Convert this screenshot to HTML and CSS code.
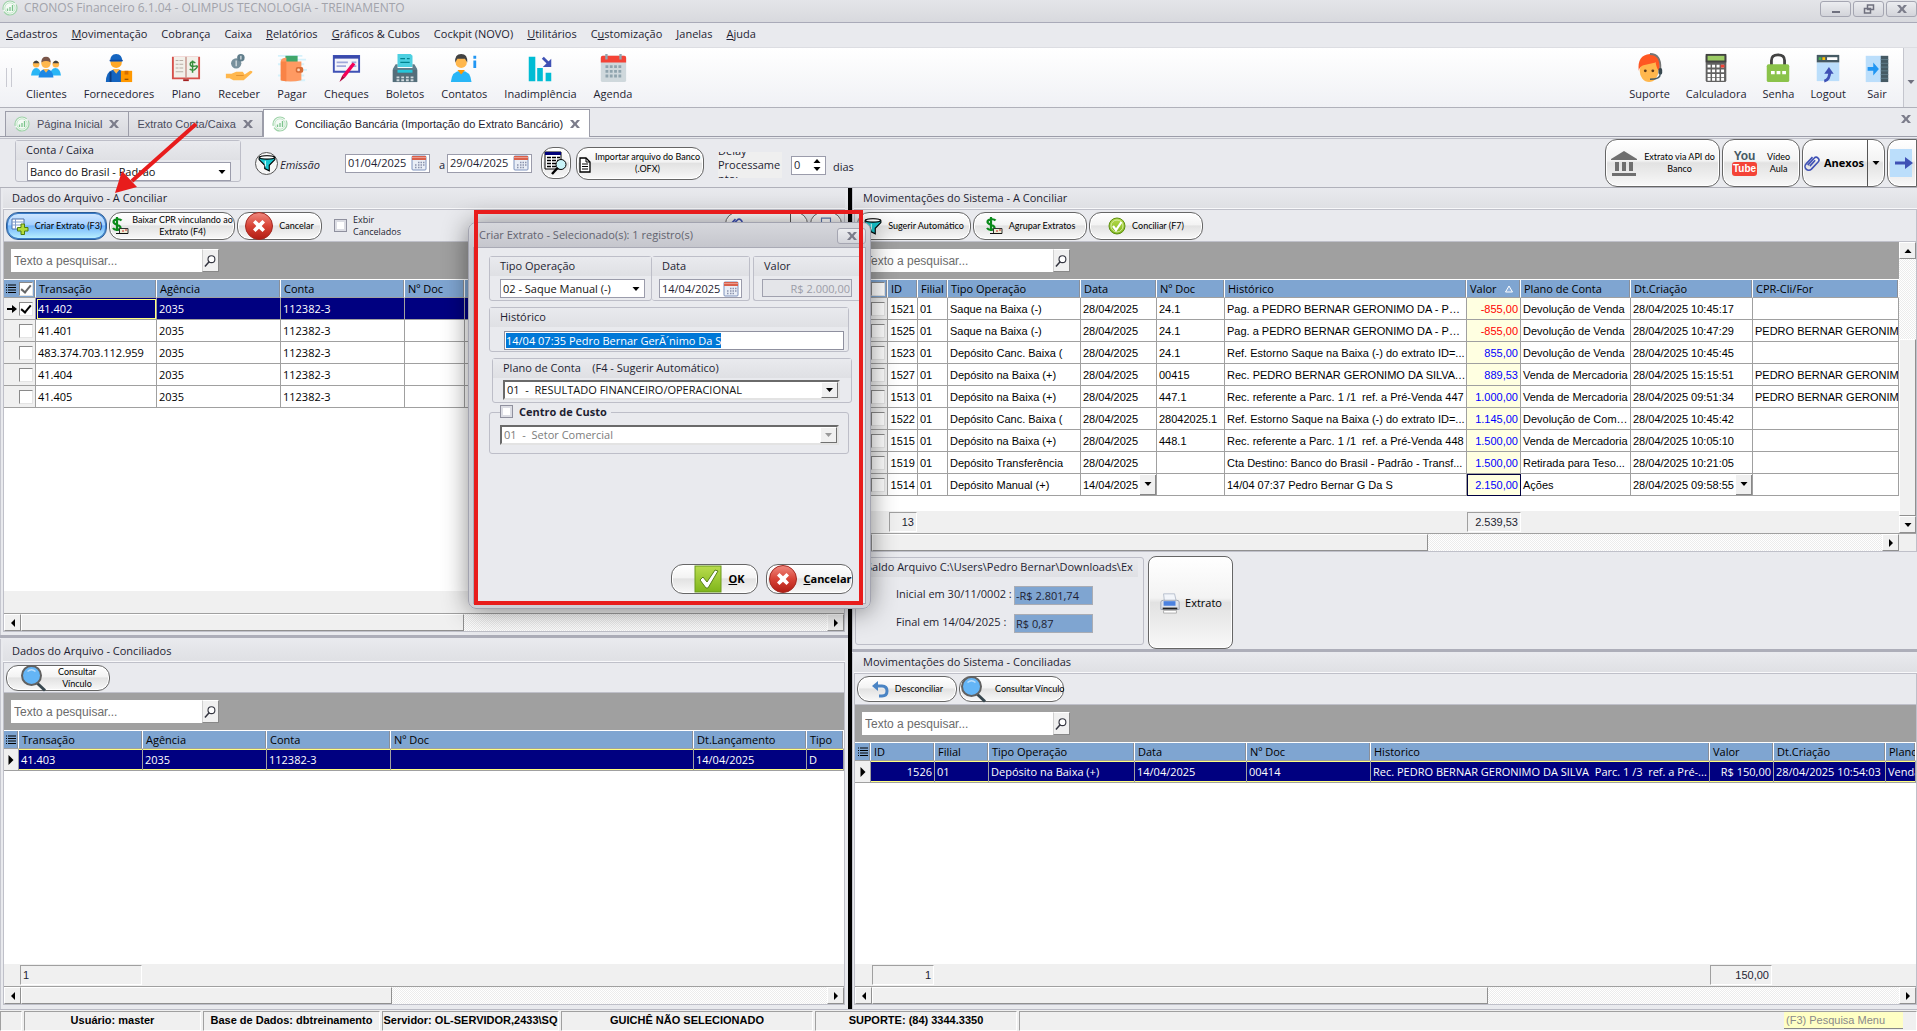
FILE: index.html
```html
<!DOCTYPE html>
<html lang="pt-BR">
<head>
<meta charset="utf-8">
<title>CRONOS Financeiro 6.1.04 - OLIMPUS TECNOLOGIA - TREINAMENTO</title>
<link rel="stylesheet" href="styles.css">
</head>
<body>
<svg class="defs" aria-hidden="true">
  <defs>
    <linearGradient id="red" x1="0" y1="0" x2="0" y2="1"><stop offset="0" stop-color="#f08a80"/><stop offset=".5" stop-color="#d84336"/><stop offset="1" stop-color="#b01c14"/></linearGradient>
    <linearGradient id="green" x1="0" y1="0" x2="0" y2="1"><stop offset="0" stop-color="#b9dc4e"/><stop offset="1" stop-color="#7fb51a"/></linearGradient>
  </defs>
  <symbol id="logo" viewBox="0 0 16 16"><circle cx="8" cy="8" r="7" fill="#f4faf5" stroke="#9fd3a9" stroke-width="1.2" stroke-dasharray="18 2"/><circle cx="8" cy="8" r="5.2" fill="none" stroke="#c3e6ca"/><path d="M5.500 11V8.500M8 11V7M10.500 11V5" stroke="#7cc48c" stroke-width="1.300"/></symbol>
  <symbol id="x" viewBox="0 0 10 10"><path d="M0 1h3l2 2.500L7 1h3L6.600 5 10 9H7L5 6.500 3 9H0l3.400-4z" fill="#7c7d8b"/></symbol>
  <symbol id="cal" viewBox="0 0 16 16"><rect x="1" y="1" width="14" height="14" rx="1" fill="#e9eef6" stroke="#7f93bd"/><path d="M1 1h14v4H1z" fill="#d9614c"/><path d="M1 2.500h14" stroke="#eb9a8b"/><path d="M7 7.500h1.500m1 0h1.500m1 0h1.500M4 10h1.500m1.500 0h1.500m1 0h1.500m1 0h1.500M4 12.500h1.500m1.500 0h1.500m1 0h1.500" stroke="#8a93ad" stroke-width="1.500"/></symbol>
  <symbol id="lens" viewBox="0 0 14 14"><circle cx="8" cy="5" r="3.700" fill="#fff" stroke="#33343f" stroke-width="1.200"/><path d="M5.300 8 1 13" stroke="#33343f" stroke-width="1.600"/></symbol>
  <symbol id="lines" viewBox="0 0 12 12"><path d="M3 2h8M3 4.500h8M3 7h8M3 9.500h8M1 2h1M1 4.500h1M1 7h1M1 9.500h1" stroke="#000" stroke-width="1"/></symbol>
  <symbol id="up" viewBox="0 0 8 8"><path d="M4 2l3.500 4h-7z"/></symbol>
  <symbol id="down" viewBox="0 0 8 8"><path d="M.5 2h7L4 6z"/></symbol>
  <symbol id="left" viewBox="0 0 8 8"><path d="M2 4l4-4v8z"/></symbol>
  <symbol id="right" viewBox="0 0 8 8"><path d="M6 4L2 0v8z"/></symbol>
  <symbol id="funnel" viewBox="0 0 16 16"><path d="M1 3c0-1.500 14-1.500 14 0v2l-5 5v5l-4-2v-3L1 5z" fill="#18c6cf" stroke="#000"/><ellipse cx="8" cy="3" rx="6.500" ry="1.500" fill="#fff" stroke="#000"/><path d="M6.500 6v5" stroke="#d8ffff"/></symbol>
  <symbol id="money" viewBox="0 0 18 18"><path d="M10.500 3.500C9 1.500 2.500 2 2.500 5s7 2.500 7 5.500-6 3-7.500.5M6 0v14" fill="none" stroke="#0a8a1a" stroke-width="2.200"/><path d="M8.500 11.500h8.500v5H8.500z" fill="#ececd4" stroke="#333"/><path d="M11 14h2m1-1h2" stroke="#c22"/><path d="M5 16.500h12" stroke="#111"/></symbol>
  <symbol id="cancel" viewBox="0 0 28 28"><circle cx="14" cy="14" r="13.500" fill="url(#red)" stroke="#a32a22"/><path d="M8 10.500L10.500 8 14 11.300 17.500 8l2.500 2.500L16.700 14l3.300 3.500-2.500 2.500L14 16.700 10.500 20 8 17.500 11.300 14z" fill="#fff"/></symbol>
  <symbol id="search-big" viewBox="0 0 28 28"><path d="M17 19l8 7.500" stroke="#37474f" stroke-width="3"/><circle cx="11.500" cy="11.500" r="9.500" fill="#64b5f6" stroke="#616161" stroke-width="2"/><path d="M7.500 7.500q4-3.500 8 0" stroke="#bbdefb" stroke-width="1.500" fill="none"/></symbol>
  <symbol id="clip" viewBox="0 0 16 16"><path d="M3.500 9.500L9.500 3a2.600 2.600 0 013.800 3.600L7 13.300a3.500 3.500 0 01-5-5L8 2M5.500 10.500l5-5.500" fill="none" stroke="#3f51b5" stroke-width="1.500"/></symbol>
  <symbol id="exit" viewBox="0 0 24 28"><path d="M0 0h22v28H0z" fill="#bbdefb"/><path d="M5 12.500h10V8l8 6-8 6v-4.500H5z" fill="#3f51b5"/></symbol>
</svg>

<header class="titlebar">
  <svg class="i16"><use href="#logo"/></svg>
  <h1>CRONOS Financeiro 6.1.04 - OLIMPUS TECNOLOGIA - TREINAMENTO</h1>
  <button class="winbtn" aria-label="Minimizar"><svg viewBox="0 0 12 10"><path d="M2 8h8" stroke="#6f707e" stroke-width="2"/></svg></button>
  <button class="winbtn" aria-label="Restaurar"><svg viewBox="0 0 12 10"><path d="M4.500 1h6v4.500h-6zM1.500 4.500h6V9h-6z" fill="#e0e1e5" stroke="#6f707e" stroke-width="1.500"/></svg></button>
  <button class="winbtn" aria-label="Fechar"><svg viewBox="0 0 10 10"><use href="#x"/></svg></button>
</header>

<nav class="menu">
  <a href="#"><u>C</u>adastros</a><a href="#"><u>M</u>ovimentação</a><a href="#">Cobrança</a><a href="#">Caixa</a><a href="#"><u>R</u>elatórios</a><a href="#"><u>G</u>ráficos &amp; Cubos</a><a href="#">Cockpit (NOVO)</a><a href="#"><u>U</u>tilitários</a><a href="#">C<u>u</u>stomização</a><a href="#"><u>J</u>anelas</a><a href="#"><u>A</u>juda</a>
</nav>

<div class="ribbon">
  <span class="grip"></span>
  <button><svg viewBox="0 0 32 32"><circle cx="5.500" cy="12" r="3.500" fill="#ffb74d"/><path d="M2 11q3.500-6 7 0z" fill="#424242"/><circle cx="26.500" cy="12" r="3.500" fill="#ffb74d"/><path d="M23 11q3.500-6 7 0z" fill="#424242"/><path d="M0 24q1-8 5.500-8t6 8zM20 24q1-8 6-8t6 8z" fill="#29b6f6"/><circle cx="16" cy="11" r="5" fill="#ffb74d"/><path d="M11 10q0-6 5-6t5 6q-5-3-10 0z" fill="#795548"/><path d="M8 26q1-9 8-9t8 9z" fill="#1e88e5"/><path d="M13 17h6l-3 4z" fill="#ffb74d"/></svg>Clientes</button>
  <button><svg viewBox="0 0 32 32"><circle cx="13" cy="10" r="6" fill="#ffa726"/><path d="M6.500 9q0-8 6.500-8t6.500 8z" fill="#1565c0"/><path d="M6 8h14" stroke="#0d47a1" stroke-width="1.500"/><path d="M2 31q0-11 7-13h8q7 2 7 13z" fill="#1565c0"/><path d="M9 17h8l-4 5z" fill="#ffb74d"/><path d="M7 20v11M19 20v11" stroke="#0d3c80" stroke-width="2"/><path d="M18 19h12v12H18z" fill="#ff9800"/><path d="M22 19h4v4h-4z" fill="#d66f00"/><path d="M22 28h4" stroke="#6d3500"/></svg>Fornecedores</button>
  <button><svg viewBox="0 0 32 32"><path d="M1 4h30v24H1z" fill="#d6504a"/><path d="M13 28h6v2h-6z" fill="#a32020"/><path d="M3 4h12.500v22H3zM16.500 4H29v22H16.500z" fill="#f2f0ea"/><path d="M16 4v23" stroke="#bdb7ad"/><path d="M5 8h3m1 0h4M5 12h3m1 0h4M5 16h3m1 0h4M5 20h8" stroke="#b4a9a0"/><path d="M26 10.500q-5-2.500-5.500 1t5 2.500-.5 4q-3 1-5-1M23 8v13" fill="none" stroke="#388e3c" stroke-width="1.600"/></svg>Plano</button>
  <button><svg viewBox="0 0 32 32"><circle cx="13" cy="11" r="5.500" fill="#78909c"/><circle cx="18" cy="5" r="4" fill="#607d8b"/><path d="M13 8v6M18 3v4" stroke="#cfd8dc" stroke-width="1.500"/><path d="M2 22h6l5-2h7l2 3 6-4q3 0 2 2l-9 8H10l-4-2H2z" fill="#ffb74d"/><path d="M13 24h8" stroke="#e09030"/></svg>Receber</button>
  <button><svg viewBox="0 0 32 32"><path d="M1 3h26M3 7h28M1 12h28M4 18h28M1 24h28M4 29h26" stroke="#d5f1fb" stroke-width="2"/><path d="M9 3h13v8H9z" fill="#3fa66a"/><path d="M4 9q0-4 6-4v4h16v20q-12 3-22 0z" fill="#ff9a62"/><path d="M4 9v20q4 1 6 1V9z" fill="#f98346"/><rect x="20" y="15" width="8" height="6" rx="2" fill="#d76b35"/><circle cx="23" cy="18" r="1.500" fill="#ffd3b8"/></svg>Pagar</button>
  <button><svg viewBox="0 0 32 32"><path d="M3 3h27v17H3z" fill="#f4f5fb" stroke="#3f51b5" stroke-width="2"/><path d="M3 3h27v3H3z" fill="#3949ab"/><path d="M6 10h12M22 10h5M6 14h10M20 14h7" stroke="#9fa8da" stroke-width="2"/><path d="M23 10l3 2-11 14-3-2z" fill="#f50057"/><path d="M12 24l3 2-6 5z" fill="#b0003a"/></svg>Cheques</button>
  <button><svg viewBox="0 0 32 32"><path d="M10 1h12l2 2v12H8V1z" fill="#4dd0e1"/><path d="M11 6h5m2 0h3M11 10h10" stroke="#00838f" stroke-width="1.300"/><path d="M6 12h2v4h16v-4h2l3 5v14H3V17z" fill="#607d8b"/><path d="M3 18h26v13H3z" fill="#546e7a"/><path d="M8 18h16v3H8z" fill="#26c6da"/><path d="M7 26h18m-18 3h18" stroke="#cfd8dc" stroke-width="2" stroke-dasharray="3 2"/></svg>Boletos</button>
  <button><svg viewBox="0 0 32 32"><circle cx="13" cy="10" r="6" fill="#ffb74d"/><path d="M6.500 10Q6 1 13 1t6.500 9L17 6H9z" fill="#424242"/><path d="M2 31q1-12 11-12t11 12z" fill="#29b6f6"/><path d="M9 18h8l-4 5z" fill="#ff9800"/><path d="M26 3h3v3h-3zM26 8h3v8h-3z" fill="#2196f3"/></svg>Contatos</button>
  <button><svg viewBox="0 0 32 32"><path d="M4 4h7v26H4zM13 16h6v14h-6zM22 21h6v9h-6z" fill="#00bcd4"/><path d="M19 5l7 7" stroke="#3f51b5" stroke-width="3"/><path d="M28 6v9h-9z" fill="#3f51b5"/></svg>Inadimplência</button>
  <button><svg viewBox="0 0 32 32"><rect x="3" y="3" width="27" height="28" rx="2" fill="#cfd8dc"/><path d="M3 10V5q0-2 2-2h23q2 0 2 2v5z" fill="#f44336"/><path d="M9 1v6M24 1v6" stroke="#90a4ae" stroke-width="2.500"/><path d="M8 14.500h17M8 19.500h17M8 24.500h17" stroke="#90a4ae" stroke-width="3" stroke-dasharray="3 1.600"/></svg>Agenda</button>
  <span class="grow"></span>
  <button><svg viewBox="0 0 32 32"><ellipse cx="15" cy="19" rx="10" ry="12" fill="#ffb74d"/><path d="M4 19Q2 2 16 1q13 0 10 18-3-2-4-9L9 13q-4 1-5 6z" fill="#ff5722"/><path d="M16 1q12 0 11 16" fill="none" stroke="#757575" stroke-width="2"/><rect x="25" y="16" width="4" height="7" rx="2" fill="#37474f"/><path d="M27 22q0 6-11 6" fill="none" stroke="#455a64" stroke-width="1.500"/><circle cx="11" cy="19" r="1.500" fill="#5d3a1a"/><circle cx="19" cy="19" r="1.500" fill="#5d3a1a"/></svg>Suporte</button>
  <button><svg viewBox="0 0 32 32"><rect x="5" y="1" width="22" height="30" rx="2" fill="#616161"/><path d="M5 1h22v9H5z" fill="#424242"/><path d="M7 3h18v5H7z" fill="#9ccc65"/><path d="M7 14h18M7 19h18M7 24h18M7 28h18" stroke="#fff" stroke-width="3" stroke-dasharray="3.200 1.600"/><path d="M21 12.500h4v3h-4z" fill="#f44336"/></svg>Calculadora</button>
  <button><svg viewBox="0 0 32 32"><path d="M9 13V8q0-6 7-6t7 6v5" fill="none" stroke="#424242" stroke-width="3"/><rect x="4" y="12" width="24" height="19" rx="2" fill="#8bc34a"/><path d="M8.500 21h4m2 0h4m2 0h4" stroke="#fff" stroke-width="3.500"/></svg>Senha</button>
  <button><svg viewBox="0 0 32 32"><path d="M4 10h24v20H4z" fill="#bbdefb"/><path d="M4 2h24v8H4z" fill="#455a64"/><path d="M15 4.500h11v3H15z" fill="#fff"/><path d="M6 6h3" stroke="#4caf50" stroke-width="3"/><path d="M10 6h3" stroke="#ffc107" stroke-width="3"/><path d="M12 30q6-1 6-11" fill="none" stroke="#3f51b5" stroke-width="3"/><path d="M12 22l5-7 5 7z" fill="#3f51b5"/></svg>Logout</button>
  <button><svg viewBox="0 0 32 32"><path d="M4 3h18v28H4z" fill="#bbdefb"/><path d="M20 3h8v28h-8z" fill="#455a64"/><path d="M20 7h8m-8 4h8m-8 4h8m-8 4h8m-8 4h8m-8 4h8" stroke="#607d8b"/><path d="M6 15h6v-5l6 7-6 7v-5H6z" fill="#2196f3"/></svg>Sair</button>
  <button class="more" aria-label="Mais"><svg viewBox="0 0 8 8"><use href="#down"/></svg></button>
</div>

<div class="tabs">
  <div class="tab"><svg class="i16"><use href="#logo"/></svg><a href="#">Página Inicial</a><button aria-label="Fechar guia"><svg><use href="#x"/></svg></button></div>
  <div class="tab"><a href="#">Extrato Conta/Caixa</a><button aria-label="Fechar guia"><svg><use href="#x"/></svg></button></div>
  <div class="tab on"><svg class="i16"><use href="#logo"/></svg><a href="#">Conciliação Bancária (Importação do Extrato Bancário)</a><button aria-label="Fechar guia"><svg><use href="#x"/></svg></button></div>
  <button class="closeall" aria-label="Fechar todas"><svg><use href="#x"/></svg></button>
</div>

<section class="filter">
  <div class="group account">
    <label for="conta">Conta / Caixa</label>
    <span class="combo"><select id="conta"><option>Banco do Brasil - Padrão</option></select><svg><use href="#down"/></svg></span>
  </div>
  <button class="round" aria-label="Filtrar"><svg viewBox="0 0 16 16"><use href="#funnel"/></svg></button>
  <label class="emissao" for="d1">Emissão</label>
  <span class="date"><input id="d1" value="01/04/2025"><svg class="i16"><use href="#cal"/></svg></span>
  <label class="to" for="d2">a</label>
  <span class="date"><input id="d2" value="29/04/2025"><svg class="i16"><use href="#cal"/></svg></span>
  <button class="btn preview" aria-label="Visualizar"><svg viewBox="0 0 24 24"><path d="M1 1h16v17H1z" fill="#fff" stroke="#000"/><path d="M1 1h16v3H1z" fill="#00007a"/><path d="M3 6.500h4m1 0h4m1 0h3M3 9.500h4m1 0h4m1 0h3M3 12.500h4m1 0h4M3 15.500h4m1 0h4" stroke="#000" stroke-width="1.500"/><circle cx="17" cy="13.500" r="5" fill="#c9f4f8" stroke="#000"/><path d="M13.500 17L8 23" stroke="#000" stroke-width="2.500"/></svg></button>
  <button class="btn import"><svg viewBox="0 0 12 16"><path d="M1 1h6l4 4v10H1z" fill="#fff" stroke="#000" stroke-width="1.300"/><path d="M7 1v4h4M3 7h6M3 9.500h6M3 12h6" fill="none" stroke="#000"/></svg><span>Importar arquivo do Banco<br>(.OFX)</span></button>
  <label class="delay" for="delay"><span>Delay Processame nto:</span></label>
  <span class="spin"><input id="delay" value="0"><span><svg><use href="#up"/></svg><svg><use href="#down"/></svg></span></span>
  <span class="dias">dias</span>
  <span class="grow"></span>
  <button class="btn tall api"><svg viewBox="0 0 28 28"><path d="M14 2L1 10v1h26v-1zM5 13h4v9H5zM12 13h4v9h-4zM19 13h4v9h-4zM2 24h24v3H2z" fill="#6f6f6f"/></svg><span>Extrato via API do<br>Banco</span></button>
  <button class="btn tall video"><span class="yt"><b>You</b><b>Tube</b></span><span>Vídeo<br>Aula</span></button>
  <button class="btn tall anexos"><svg viewBox="0 0 16 16"><use href="#clip"/></svg><b>Anexos</b><i><svg viewBox="0 0 8 8"><use href="#down"/></svg></i></button>
  <button class="btn tall go" aria-label="Avançar"><svg viewBox="0 0 24 28"><use href="#exit"/></svg></button>
</section>

<main>
  <div class="col left">
    <section class="pane">
      <h2>Dados do Arquivo - A Conciliar</h2>
      <div class="box">
        <div class="tools">
          <button class="btn blue"><svg viewBox="0 0 18 18"><path d="M1 2h12v10H1z" fill="#fff" stroke="#4c6ea8"/><path d="M1 5h12M1 8h12M4.500 2v10" stroke="#7f9ccc"/><path d="M10 7h3.500v3.500H17V14h-3.500v3.500H10V14H6.500v-3.500H10z" fill="#b4dc3c" stroke="#4d7d10"/></svg><span>Criar Extrato (F3)</span></button>
          <button class="btn baixar"><svg viewBox="0 0 18 18"><use href="#money"/></svg><span>Baixar CPR vinculando ao<br>Extrato (F4)</span></button>
          <button class="btn cancelar"><svg class="i28" viewBox="0 0 28 28"><use href="#cancel"/></svg><span>Cancelar</span></button>
          <label class="exibir"><input type="checkbox" class="skin">Exbir Cancelados</label>
          <span class="grow"></span>
          <button class="btn anexos small"><svg viewBox="0 0 16 16"><use href="#clip"/></svg><b>Anexos</b><i><svg viewBox="0 0 8 8"><use href="#down"/></svg></i></button>
          <button class="btn print" aria-label="Imprimir"><svg viewBox="0 0 16 16"><path d="M4 1h8v6h3v6H1V7h3z" fill="#fff" stroke="#5c78ad"/></svg></button>
        </div>
        <form class="find"><input type="text" aria-label="Pesquisar" placeholder="Texto a pesquisar..."><button type="button" aria-label="Buscar"><svg><use href="#lens"/></svg></button></form>
        <div class="grid">
          <table class="seg">
            <colgroup><col class="w32"><col class="w121"><col class="w124"><col class="w124"><col class="w60"><col></colgroup>
            <thead><tr><th><span class="mark"><svg><use href="#lines"/></svg><input type="checkbox" checked disabled aria-label="Todos"></span></th><th>Transação</th><th>Agência</th><th>Conta</th><th>Nº Doc</th><th></th></tr></thead>
            <tbody>
              <tr class="sel"><td><span class="mark"><svg viewBox="0 0 10 10"><path d="M0 4h5V1l5 4-5 4V6H0z"/></svg><input type="checkbox" checked aria-label="41.402"></span></td><td class="cur">41.402</td><td>2035</td><td>112382-3</td><td></td><td></td></tr>
              <tr><td><span class="mark"><input type="checkbox" aria-label="41.401"></span></td><td>41.401</td><td>2035</td><td>112382-3</td><td></td><td></td></tr>
              <tr><td><span class="mark"><input type="checkbox" aria-label="483.374.703.112.959"></span></td><td>483.374.703.112.959</td><td>2035</td><td>112382-3</td><td></td><td></td></tr>
              <tr><td><span class="mark"><input type="checkbox" aria-label="41.404"></span></td><td>41.404</td><td>2035</td><td>112382-3</td><td></td><td></td></tr>
              <tr><td><span class="mark"><input type="checkbox" aria-label="41.405"></span></td><td>41.405</td><td>2035</td><td>112382-3</td><td></td><td></td></tr>
            </tbody>
          </table>
        </div>
        <div class="foot"></div>
        <div class="hbar"><button aria-label="Esquerda"><svg><use href="#left"/></svg></button><span class="track"><i class="thumb t55"></i></span><button aria-label="Direita"><svg><use href="#right"/></svg></button></div>
      </div>
    </section>
    <div class="split"></div>
    <section class="pane low">
      <h2>Dados do Arquivo - Conciliados</h2>
      <div class="box">
        <div class="tools">
          <button class="btn vinculo"><svg class="i28" viewBox="0 0 28 28"><use href="#search-big"/></svg><span>Consultar<br>Vínculo</span></button>
        </div>
        <form class="find"><input type="text" aria-label="Pesquisar" placeholder="Texto a pesquisar..."><button type="button" aria-label="Buscar"><svg><use href="#lens"/></svg></button></form>
        <div class="grid">
          <table class="seg">
            <colgroup><col class="w15"><col class="w124"><col class="w124"><col class="w124"><col><col class="w113"><col class="w37"></colgroup>
            <thead><tr><th><span class="mark one"><svg><use href="#lines"/></svg></span></th><th>Transação</th><th>Agência</th><th>Conta</th><th>Nº Doc</th><th>Dt.Lançamento</th><th>Tipo</th></tr></thead>
            <tbody><tr class="sel ring"><td><span class="mark one"><svg viewBox="0 0 8 8"><use href="#right"/></svg></span></td><td>41.403</td><td>2035</td><td>112382-3</td><td></td><td>14/04/2025</td><td>D</td></tr></tbody>
          </table>
        </div>
        <div class="foot"><span class="sum first121">1</span></div>
        <div class="hbar"><button aria-label="Esquerda"><svg><use href="#left"/></svg></button><span class="track"><i class="thumb t46"></i></span><button aria-label="Direita"><svg><use href="#right"/></svg></button></div>
      </div>
    </section>
  </div>

  <div class="divider"></div>

  <div class="col right">
    <section class="pane">
      <h2>Movimentações do Sistema - A Conciliar</h2>
      <div class="box">
        <div class="tools">
          <button class="btn w114"><svg viewBox="0 0 16 16"><use href="#funnel"/></svg><span>Sugerir Automático</span></button>
          <button class="btn w114"><svg viewBox="0 0 18 18"><use href="#money"/></svg><span>Agrupar Extratos</span></button>
          <button class="btn w114"><svg viewBox="0 0 18 18"><circle cx="9" cy="9" r="8" fill="url(#green)" stroke="#5d8f12"/><circle cx="9" cy="9" r="6" fill="none" stroke="#d4eda0"/><path d="M5 9l3 4 5.500-8" fill="none" stroke="#fff" stroke-width="2.200"/></svg><span>Conciliar (F7)</span></button>
        </div>
        <div class="scrolled">
          <div class="stack">
            <form class="find"><input type="text" aria-label="Pesquisar" placeholder="Texto a pesquisar..."><button type="button" aria-label="Buscar"><svg><use href="#lens"/></svg></button></form>
            <div class="grid">
              <table>
                <colgroup><col class="w33"><col class="w30"><col class="w30"><col class="w133"><col class="w76"><col class="w68"><col class="w242"><col class="w54"><col class="w110"><col class="w122"><col></colgroup>
                <thead><tr><th><span class="mark"><svg><use href="#lines"/></svg><input type="checkbox" aria-label="Todos"></span></th><th>ID</th><th>Filial</th><th>Tipo Operação</th><th>Data</th><th>Nº Doc</th><th>Histórico</th><th>Valor <svg class="sort" viewBox="0 0 8 8"><path d="M4 1L7.500 7h-7z"/></svg></th><th>Plano de Conta</th><th>Dt.Criação</th><th>CPR-Cli/For</th></tr></thead>
                <tbody>
                  <tr><td><span class="mark"><input type="checkbox" aria-label="1521"></span></td><td class="r">1521</td><td>01</td><td>Saque na Baixa (-)</td><td>28/04/2025</td><td>24.1</td><td>Pag. a PEDRO BERNAR GERONIMO DA - Parc...</td><td class="v neg">-855,00</td><td>Devolução de Venda</td><td>28/04/2025 10:45:17</td><td></td></tr>
                  <tr><td><span class="mark"><input type="checkbox" aria-label="1525"></span></td><td class="r">1525</td><td>01</td><td>Saque na Baixa (-)</td><td>28/04/2025</td><td>24.1</td><td>Pag. a PEDRO BERNAR GERONIMO DA - Parc...</td><td class="v neg">-855,00</td><td>Devolução de Venda</td><td>28/04/2025 10:47:29</td><td>PEDRO BERNAR GERONIMO DA</td></tr>
                  <tr><td><span class="mark"><input type="checkbox" aria-label="1523"></span></td><td class="r">1523</td><td>01</td><td>Depósito Canc. Baixa (</td><td>28/04/2025</td><td>24.1</td><td>Ref. Estorno Saque na Baixa (-) do extrato ID=...</td><td class="v">855,00</td><td>Devolução de Venda</td><td>28/04/2025 10:45:45</td><td></td></tr>
                  <tr><td><span class="mark"><input type="checkbox" aria-label="1527"></span></td><td class="r">1527</td><td>01</td><td>Depósito na Baixa (+)</td><td>28/04/2025</td><td>00415</td><td>Rec. PEDRO BERNAR GERONIMO DA SILVA P...</td><td class="v">889,53</td><td>Venda de Mercadoria</td><td>28/04/2025 15:15:51</td><td>PEDRO BERNAR GERONIMO DA</td></tr>
                  <tr><td><span class="mark"><input type="checkbox" aria-label="1513"></span></td><td class="r">1513</td><td>01</td><td>Depósito na Baixa (+)</td><td>28/04/2025</td><td>447.1</td><td>Rec. referente a Parc. 1 /1 &nbsp;ref. a Pré-Venda 447</td><td class="v">1.000,00</td><td>Venda de Mercadoria</td><td>28/04/2025 09:51:34</td><td>PEDRO BERNAR GERONIMO DA</td></tr>
                  <tr><td><span class="mark"><input type="checkbox" aria-label="1522"></span></td><td class="r">1522</td><td>01</td><td>Depósito Canc. Baixa (</td><td>28/04/2025</td><td>28042025.1</td><td>Ref. Estorno Saque na Baixa (-) do extrato ID=...</td><td class="v">1.145,00</td><td>Devolução de Comp...</td><td>28/04/2025 10:45:42</td><td></td></tr>
                  <tr><td><span class="mark"><input type="checkbox" aria-label="1515"></span></td><td class="r">1515</td><td>01</td><td>Depósito na Baixa (+)</td><td>28/04/2025</td><td>448.1</td><td>Rec. referente a Parc. 1 /1 &nbsp;ref. a Pré-Venda 448</td><td class="v">1.500,00</td><td>Venda de Mercadoria</td><td>28/04/2025 10:05:10</td><td></td></tr>
                  <tr><td><span class="mark"><input type="checkbox" aria-label="1519"></span></td><td class="r">1519</td><td>01</td><td>Depósito Transferência</td><td>28/04/2025</td><td></td><td>Cta Destino: Banco do Brasil - Padrão - Transf...</td><td class="v">1.500,00</td><td>Retirada para Teso...</td><td>28/04/2025 10:21:05</td><td></td></tr>
                  <tr><td><span class="mark"><input type="checkbox" aria-label="1514"></span></td><td class="r">1514</td><td>01</td><td>Depósito Manual (+)</td><td><span class="pick">14/04/2025<button aria-label="Escolher data"><svg><use href="#down"/></svg></button></span></td><td></td><td>14/04 07:37 Pedro Bernar G Da S</td><td class="v focus">2.150,00</td><td>Ações</td><td><span class="pick">28/04/2025 09:58:55<button aria-label="Escolher data"><svg><use href="#down"/></svg></button></span></td><td></td></tr>
                </tbody>
              </table>
            </div>
            <div class="foot"><span class="sum id30 r">13</span><span class="sum tot54 r">2.539,53</span></div>
          </div>
          <div class="vbar"><button aria-label="Acima"><svg><use href="#up"/></svg></button><span class="track"><i></i></span><button aria-label="Abaixo"><svg><use href="#down"/></svg></button></div>
        </div>
        <div class="hbar corner"><button aria-label="Esquerda"><svg><use href="#left"/></svg></button><span class="track"><i class="thumb t55"></i></span><button aria-label="Direita"><svg><use href="#right"/></svg></button></div>
      </div>
      <div class="balance">
        <div class="group saldo">
          <h3>Saldo Arquivo C:\Users\Pedro Bernar\Downloads\Ex</h3>
          <p><label for="ini">Inicial em 30/11/0002 :</label><input id="ini" value="-R$ 2.801,74" readonly></p>
          <p><label for="fim">Final em 14/04/2025 :</label><input id="fim" value="R$ 0,87" readonly></p>
        </div>
        <button class="btn extrato"><svg viewBox="0 0 24 24"><path d="M5 2h12l2 9H6z" fill="#f2f5fa" stroke="#b4bccb"/><path d="M2 11q0-2 3-2h14q3 0 3 2v8H2z" fill="#dfe3ea" stroke="#9aa2b0"/><path d="M5 10h13v5H5z" fill="#4b82e0"/><path d="M4 18h16" stroke="#222" stroke-width="2"/><path d="M5 20h14v3H5z" fill="#fff" stroke="#aaa"/></svg>Extrato</button>
      </div>
    </section>
    <div class="split"></div>
    <section class="pane low">
      <h2>Movimentações do Sistema - Conciliadas</h2>
      <div class="box">
        <div class="tools">
          <button class="btn w100"><svg viewBox="0 0 18 18"><path d="M4 6h7q5 0 5 5t-5 5H8" fill="none" stroke="#4a84c4" stroke-width="3"/><path d="M7 1v10L1 6z" fill="#4a84c4"/></svg><span>Desconciliar</span></button>
          <button class="btn consultar"><svg class="i28" viewBox="0 0 28 28"><use href="#search-big"/></svg><span>Consultar Vínculo</span></button>
        </div>
        <form class="find"><input type="text" aria-label="Pesquisar" placeholder="Texto a pesquisar..."><button type="button" aria-label="Buscar"><svg><use href="#lens"/></svg></button></form>
        <div class="grid">
          <table class="seg">
            <colgroup><col class="w16"><col class="w64"><col class="w54"><col class="w146"><col class="w112"><col class="w124"><col><col class="w64"><col class="w112"><col class="w30"></colgroup>
            <thead><tr><th><span class="mark one"><svg><use href="#lines"/></svg></span></th><th>ID</th><th>Filial</th><th>Tipo Operação</th><th>Data</th><th>Nº Doc</th><th>Historico</th><th>Valor</th><th>Dt.Criação</th><th>Plano</th></tr></thead>
            <tbody><tr class="sel ring"><td><span class="mark one"><svg viewBox="0 0 8 8"><use href="#right"/></svg></span></td><td class="r">1526</td><td>01</td><td>Depósito na Baixa (+)</td><td>14/04/2025</td><td>00414</td><td>Rec. PEDRO BERNAR GERONIMO DA SILVA &nbsp;Parc. 1 /3 &nbsp;ref. a Pré-...</td><td class="r">R$ 150,00</td><td>28/04/2025 10:54:03</td><td>Venda</td></tr></tbody>
          </table>
        </div>
        <div class="foot"><span class="sum id62 r">1</span><span class="sum tot62 r">150,00</span></div>
        <div class="hbar"><button aria-label="Esquerda"><svg><use href="#left"/></svg></button><span class="track"><i class="thumb t60"></i></span><button aria-label="Direita"><svg><use href="#right"/></svg></button></div>
      </div>
    </section>
  </div>
</main>

<footer class="status">
  <span class="s21"></span><span class="s177">Usuário: master</span><span class="s177">Base de Dados: dbtreinamento</span><span class="s177">Servidor: OL-SERVIDOR,2433\SQ</span><span class="s252">GUICHÊ NÃO SELECIONADO</span><span class="s202">SUPORTE: (84) 3344.3350</span><span class="rest"><input aria-label="Pesquisa Menu" placeholder="(F3) Pesquisa Menu"></span>
</footer>

<div class="dialog" role="dialog" aria-labelledby="dlgtitle">
  <div class="dtitle"><h2 id="dlgtitle">Criar Extrato - Selecionado(s): 1 registro(s)</h2><button class="winbtn" aria-label="Fechar"><svg viewBox="0 0 10 10"><use href="#x"/></svg></button></div>
  <div class="dbody">
    <div class="drow">
      <div class="group tipo"><label for="tipo">Tipo Operação</label><span class="combo"><select id="tipo"><option>02 - Saque Manual (-)</option></select><svg><use href="#down"/></svg></span></div>
      <div class="group data"><label for="data">Data</label><span class="date"><input id="data" value="14/04/2025"><svg class="i16"><use href="#cal"/></svg></span></div>
      <div class="group valor"><label for="valor">Valor</label><input id="valor" class="r" value="R$ 2.000,00" disabled></div>
    </div>
    <div class="group hist"><label for="hist">Histórico</label><input id="hist" value="14/04 07:35 Pedro Bernar GerÃ´nimo Da S"></div>
    <div class="group plano"><label for="plano">Plano de Conta &nbsp; &nbsp;(F4 - Sugerir Automático)</label><span class="combo raised"><select id="plano"><option>01 &nbsp;- &nbsp;RESULTADO FINANCEIRO/OPERACIONAL</option></select><svg><use href="#down"/></svg></span></div>
    <fieldset class="centro"><legend><label><input type="checkbox" class="skin">Centro de Custo</label></legend><span class="combo raised off"><select aria-label="Centro de Custo" disabled><option>01 &nbsp;- &nbsp;Setor Comercial</option></select><svg><use href="#down"/></svg></span></fieldset>
    <div class="actions">
      <button class="btn ok"><svg class="i28" viewBox="0 0 28 28"><rect x="1" y="1" width="26" height="26" fill="url(#green)" stroke="#6a9a1c"/><path d="M6 15l3-3 4 5 8-12 3 1-10 17h-2z" fill="#fff" stroke="#58801a"/></svg><b><u>O</u>K</b></button>
      <button class="btn no"><svg class="i28" viewBox="0 0 28 28"><use href="#cancel"/></svg><b><u>C</u>ancelar</b></button>
    </div>
  </div>
</div>
<div class="highlight"></div>
<svg class="pointer" viewBox="0 0 90 76"><path d="M84 3L20 60" stroke="#e81c1c" stroke-width="4"/><path d="M3 72L10 50 25 66z" fill="#e81c1c"/></svg>
<script src="app.js"></script>
</body>
</html>
```
FILE: styles.css
```css
* { box-sizing: border-box; }
body { margin: 0; min-height: 100vh; display: flex; flex-direction: column; position: relative; background: #e9eaee; color: #1e1e32; font: 11px/14px "Open Sans", "Noto Sans", sans-serif; overflow: hidden; }
h1, h2, h3, p { margin: 0; font: inherit; }
button, input, select { font: inherit; color: inherit; margin: 0; padding: 0; border: 0; background: none; outline: 0; border-radius: 0; min-width: 0; }
select { appearance: none; opacity: 1; }
a { color: inherit; text-decoration: none; }
svg { display: block; flex: none; width: 8px; height: 8px; }
.defs { position: absolute; width: 0; height: 0; }
.i16 { width: 16px; height: 16px; }
.grow { flex: 1; }
.r { text-align: right; }

/* window frame */
.titlebar { height: 23px; display: flex; gap: 2px; padding: 0 0 0 2px; border-bottom: 1px solid #a9aab8; background: linear-gradient(#e4e5e9, #d8d9de); }
.titlebar > svg { align-self: center; margin-bottom: 6px; }
.titlebar h1 { flex: 1; padding-left: 4px; font-size: 12px; line-height: 16px; color: #a2a3ab; }
.winbtn { width: 31px; height: 16px; margin-top: 1px; display: grid; place-items: center; border: 1px solid #a5a6b2; border-radius: 3px; background: linear-gradient(#ecedf0, #d3d4da); }
.winbtn svg { width: 12px; height: 10px; }
.menu { height: 24px; display: flex; gap: 14px; padding: 3px 6px; line-height: 16px; }
.ribbon { height: 61px; display: flex; align-items: stretch; background: linear-gradient(#fff, #f0f1f5); border-top: 1px solid #dcdde2; border-bottom: 1px solid #b0b1ba; }
.ribbon button { display: flex; flex-direction: column; align-items: center; margin-right: 1px; padding: 5px 8px 0; gap: 2px; line-height: 18px; }
.ribbon .grow ~ button { margin-right: 0; }
.ribbon button svg { width: 30px; height: 30px; }
.grip { width: 6px; margin: 20px 6px; border: solid #c9cad2; border-width: 0 1px; }
.ribbon .more { width: 14px; padding: 30px 0 0; margin-left: 3px; border-left: 1px solid #c4c5cd; background: #e9eaee; fill: #70717f; }
.ribbon .more svg { width: 8px; height: 8px; }
.tabs { height: 29px; display: flex; align-items: flex-end; padding: 1px 6px 0 5px; border-bottom: 1px solid #9c9da9; font-family: "Liberation Sans", Arial, sans-serif; }
.tab { height: 25px; display: flex; align-items: center; gap: 7px; padding: 0 9px 0 8px; border: 1px solid #9c9da9; border-bottom: 0; color: #4a4b5c; background: linear-gradient(#e7e8ec, #d8d9de); }
.tab + .tab { border-left: 0; }
.tab.on { height: 28px; background: #fff; color: #1e1e32; margin-bottom: -1px; border-left: 1px solid #9c9da9; }
.tab svg:not(.i16), .closeall svg { width: 10px; height: 10px; }
.closeall { margin: 0 0 12px auto; }

/* skinned controls */
.btn { height: 28px; display: flex; align-items: center; justify-content: center; gap: 6px; padding: 0 4px; border: 1px solid #666; border-radius: 12px; color: #000; background: linear-gradient(#fff, #f3f3f3 45%, #e2e2e2 50%, #f8f8f8); box-shadow: inset 0 0 0 1px #fff; font-size: 9px; line-height: 12px; white-space: nowrap; }
.btn span { font-family: Lato, "Open Sans", sans-serif; }
.btn svg { width: 18px; height: 18px; }
.btn svg.i28 { width: 28px; height: 28px; }
.btn b { font-size: 11px; }
.btn.blue { width: 101px; border-color: #2b5c96; background: linear-gradient(#d2e8ff, #a5d0ff 45%, #74b5fb 50%, #bdf3ff); box-shadow: inset 0 0 0 1px #3a7cc8; }
.group { border: 1px solid #bdbec8; border-radius: 3px; }
.group > label, .group > h3 { display: block; height: 19px; line-height: 18px; padding-left: 10px; background: linear-gradient(#e9eaee, #dfe0e4); }
.combo { display: grid; align-items: center; height: 19px; border: 1px solid #9b9cab; background: #fff; color: #111; }
.combo select, .combo svg { grid-area: 1 / 1; }
.combo select { width: 100%; height: 17px; padding-left: 2px; }
.combo svg { justify-self: end; margin-right: 4px; pointer-events: none; }
.raised { height: 20px; border: 2px solid; border-color: #6a6a6a #e3e3e3 #e3e3e3 #6a6a6a; }
.raised select { height: 16px; }
.raised svg { width: 17px; height: 16px; padding: 3px; margin: 0; background: #f0f0f0; border: 1px solid; border-color: #fff #707070 #707070 #fff; }
.off, .off select:disabled { color: #7c7c7c; fill: #999; }
.date { width: 85px; height: 19px; display: flex; align-items: center; padding: 0 2px; border: 1px solid #9b9cab; background: #fff; }
.date input { width: 64px; }
input.skin { appearance: none; width: 13px; height: 13px; border: 1px solid #8f909e; background: #fff; box-shadow: inset 0 0 0 2px #dcdde4; }

/* filter bar */
.filter { height: 49px; display: flex; align-items: center; padding-left: 15px; background: #e9eaee; border-top: 1px solid #bfc0c9; margin-top: 1px; }
.account { width: 226px; height: 42px; margin-bottom: 4px; }
.account .combo { width: 204px; margin: 2px 0 0 11px; }
.round { width: 23px; height: 23px; margin-left: 14px; border: 1px solid #555; border-radius: 50%; display: grid; place-items: center; background: #f6f6f6; }
.round svg { width: 18px; height: 18px; }
.emissao { width: 65px; margin: 4px 0 0 2px; font-style: italic; }
.to { width: 17px; padding: 4px 2px 0 0; text-align: right; }
.preview { width: 30px; height: 32px; margin: 0 5px 0 9px; padding: 0; }
.preview svg { width: 24px; height: 24px; }
.import { width: 128px; height: 33px; gap: 4px; padding: 0 1px 0 0; }
.import svg { width: 12px; height: 16px; margin-top: 4px; }
.delay { width: 64px; height: 26px; margin: 4px 9px 0 14px; overflow: hidden; display: flex; align-items: center; background: #efefef; }
.spin { width: 35px; height: 19px; margin: 4px 7px 0 0; display: flex; align-items: center; border: 1px solid #9b9cab; background: #fff; padding: 0 4px 0 2px; }
.spin input { width: 20px; }
.dias { margin-top: 8px; }
.tall { height: 48px; margin-right: 2px; }
.tall svg { width: 28px; height: 28px; }
.api { width: 115px; }
.video { width: 78px; gap: 10px; }
.yt { display: grid; justify-items: center; color: #455a64; }
.btn .yt b { font: bold 12px/12px "Liberation Sans", Arial, sans-serif; }
.btn .yt b + b { background: #f44336; color: #fff; border-radius: 3px; padding: 1px 1px; font-size: 10px; }
.anexos { width: 83px; padding: 0 0 0 1px; gap: 3px; }
.anexos svg { width: 17px; height: 19px; }
.anexos i { align-self: stretch; display: grid; place-items: center; width: 19px; border-left: 1px solid #555; }
.anexos i svg { width: 8px; height: 8px; }
.go { width: 30px; margin-right: 0; padding: 0; border-radius: 12px 0 0 12px; }

/* work area */
main { flex: 1; display: grid; grid-template-columns: minmax(0, 848fr) 4px minmax(0, 1065fr); border-top: 1px solid #b0b1ba; border-bottom: 1px solid #b9bac4; }
.divider { background: #000; }
.col { display: grid; min-height: 0; }
.left { grid-template-rows: minmax(0, 447fr) 4px minmax(0, 370fr); }
.right { grid-template-rows: minmax(0, 461fr) 4px minmax(0, 356fr); }
.split { background: #adaeb9; border-bottom: 1px solid #e9eaee; }
.pane { display: flex; flex-direction: column; min-height: 0; min-width: 0; padding: 0 3px 3px 2px; border-left: 1px solid #c6c7cf; }
.right .pane { padding: 0 0 3px 1px; }
.right .pane:first-child { padding-bottom: 0; }
.pane.low, .right .pane.low { padding-bottom: 4px; }
.pane > h2 { height: 21px; padding: 3px 9px; background: linear-gradient(#e9eaee, #dfe0e4); border-bottom: 1px solid #f8f8fa; }
.low > h2 { height: 23px; padding-top: 5px; }
.right .low > h2 { height: 20px; padding-top: 2px; }
.box { flex: 1; min-height: 0; display: flex; flex-direction: column; border: 1px solid #bfc0c9; }
.tools { height: 32px; display: flex; align-items: center; gap: 2px; padding: 0 2px; border-bottom: 1px solid #bfc0c9; }
.low .tools { height: 30px; }
.low .btn { height: 26px; }
.right .low .tools { height: 31px; }
.baixar { width: 126px; gap: 3px; padding: 0 1px; }
.cancelar { width: 85px; }
.exibir { display: flex; align-items: center; gap: 6px; width: 100px; padding-left: 10px; font-size: 9px; line-height: 12px; }
.exibir input { flex: none; }
.small { width: 83px; }
.print { width: 32px; }
.vinculo { width: 104px; gap: 10px; }
.w114 { width: 114px; }
.btn.w100 { width: 100px; }
.consultar { width: 105px; gap: 7px; padding: 0; justify-content: flex-start; }
.find { height: 37px; display: flex; align-items: center; padding: 0 7px; background: #a0a0a0; font: 12px/16px "Liberation Sans", Arial, sans-serif; }
.find input { width: 191px; height: 23px; padding: 0 3px; background: #fff; }
.find input::placeholder { color: #6b6b6b; opacity: 1; }
.find button { width: 17px; height: 23px; display: grid; place-items: center; background: #f0f0f0; border: solid; border-width: 1px; border-color: #fff #888 #888 #d0d0d0; }
.find svg { width: 13px; height: 14px; }

/* data grids */
.grid { flex: 1; min-height: 0; overflow: hidden; background: #fff; }
table { width: 100%; table-layout: fixed; border-collapse: separate; border-spacing: 0; font-family: "Liberation Sans", Arial, sans-serif; color: #000; }
th, table.seg { font-family: "Open Sans", "Noto Sans", sans-serif; }
th { height: 19px; padding: 0 0 0 3px; text-align: left; font-weight: normal; line-height: 17px; background: #7fa5d1; border-top: 1px solid #fff; border-bottom: 1px solid #a0a0a0; border-right: 1px solid #fff; box-shadow: inset -1px 0 #8a8f99; white-space: nowrap; overflow: hidden; }
td { height: 22px; padding: 0 0 0 2px; line-height: 20px; border: solid #a0a0a0; border-width: 0 1px 1px 0; white-space: nowrap; overflow: hidden; text-overflow: ellipsis; }
td:last-child { text-overflow: clip; }
td.r, td.v { padding-right: 2px; }
td:first-child { background: #f0f0f0; }
th:first-child, td:first-child { padding: 0; }
.sel td:not(:first-child) { background: #000080; color: #fff; }
.ring td:not(:first-child) { box-shadow: inset 0 1px #ffff80, inset 0 -1px #ffff80; }
.sel td.cur { outline: 1px solid #ffff80; outline-offset: -2px; }
.v { text-align: right; background: #ffffe1; color: #00f; }
.neg { color: #f00; }
.focus { outline: 1px solid #000040; outline-offset: -1px; }
.sort { display: inline-block; margin-left: 6px; fill: #8db0dc; stroke: #fff; }
.mark { display: flex; align-items: center; justify-content: flex-end; gap: 2px; padding-right: 2px; }
.mark.one { justify-content: center; padding: 0; }
.mark svg { width: 10px; height: 10px; }
th .mark svg { width: 12px; height: 12px; }
.mark input { appearance: none; width: 14px; height: 14px; background: #fff; border: solid; border-width: 1px; border-color: #8a8a8a #e4e4e4 #e4e4e4 #8a8a8a; display: grid; place-items: center; }
.mark input:checked::after { content: ""; width: 4px; height: 8px; margin-bottom: 3px; border: solid #000; border-width: 0 2px 2px 0; transform: rotate(40deg); }
.mark input:disabled::after { border-color: #666; }
.pick { display: flex; justify-content: space-between; }
.pick button { width: 16px; height: 20px; display: grid; place-items: center; background: #f0f0f0; border: solid; border-width: 0 1px 1px 0; border-color: #888; }
.w15 { width: 15px; } .w16 { width: 16px; } .w30 { width: 30px; } .w32 { width: 32px; } .w33 { width: 33px; } .w37 { width: 37px; }
.w54 { width: 54px; } .w60 { width: 60px; } .w64 { width: 64px; } .w68 { width: 68px; } .w76 { width: 76px; } .w110 { width: 110px; }
.w112 { width: 112px; } .w113 { width: 113px; } .w121 { width: 121px; } .w122 { width: 122px; } .w124 { width: 124px; } .w133 { width: 133px; } .w146 { width: 146px; } .w242 { width: 242px; }
.foot { height: 22px; display: flex; background: #f0f0f0; font-family: "Liberation Sans", Arial, sans-serif; }
.sum { height: 20px; margin-top: 1px; padding: 0 2px; line-height: 19px; border: solid; border-width: 1px; border-color: #a0a0a0 #fff #fff #a0a0a0; }
.first121 { width: 122px; margin-left: 16px; }
.id30 { width: 28px; margin-left: 34px; }
.tot54 { width: 54px; margin-left: 550px; }
.id62 { width: 62px; margin-left: 17px; }
.tot62 { width: 62px; margin-left: auto; margin-right: 144px; }
.hbar, .vbar { display: flex; background: #f0f0f0; }
.hbar { height: 18px; border-top: 1px solid #a0a0a0; }
.hbar.corner { padding-right: 17px; }
.hbar button, .vbar button { width: 17px; height: 17px; display: grid; place-items: center; border: solid; border-width: 1px; border-color: #fff #909090 #909090 #fff; }
.track { flex: 1; background: conic-gradient(#fff 25%, #ececec 0 50%, #fff 0 75%, #ececec 0) 0 0 / 2px 2px; }
.thumb { display: block; height: 100%; background: #f0f0f0; border: solid; border-width: 1px; border-color: #fff #909090 #909090 #fff; }
.t55 { width: 55%; } .t46 { width: 46%; } .t60 { width: 60%; }
.scrolled { flex: 1; min-height: 0; display: flex; }
.stack { flex: 1; min-width: 0; display: flex; flex-direction: column; }
.vbar { width: 17px; flex-direction: column; }
.vbar .track { display: flex; align-items: flex-end; }
.vbar .track i { width: 100%; height: 69%; background: #f0f0f0; border: solid; border-width: 1px; border-color: #fff #909090 #909090 #fff; }

/* balance */
.balance { height: 97px; display: flex; padding: 4px 0 1px 1px; gap: 4px; align-items: flex-start; }
.saldo { width: 289px; height: 88px; margin-top: 1px; }
.saldo h3 { width: 282px; overflow: hidden; white-space: nowrap; }
.saldo p { display: flex; gap: 0; height: 19px; margin-top: 9px; padding-left: 40px; }
.saldo label { width: 118px; line-height: 16px; white-space: nowrap; }
.saldo input { width: 79px; height: 19px; padding: 0 1px; background: #7fa5d1; border: 1px solid #a9acb4; }
.extrato { width: 85px; height: 93px; border-radius: 8px; font-size: 11px; gap: 4px; }
.extrato svg { width: 22px; height: 24px; }

/* status bar */
.status { height: 21px; display: flex; gap: 2px; background: #f0f0f0; font: bold 11px/17px "Liberation Sans", Arial, sans-serif; color: #000; text-align: center; white-space: nowrap; }
.status > span { margin-top: 1px; border: solid; border-width: 1px; border-color: #a0a0a0 #fff #fff #a0a0a0; overflow: hidden; }
.s21 { width: 22px; } .s177 { width: 177px; } .s252 { width: 252px; } .s202 { width: 202px; }
.rest { flex: 1; display: flex; justify-content: flex-end; padding-right: 13px; }
.rest input { width: 119px; height: 17px; padding: 0 2px; background: #ffffc4; border-bottom: 1px solid #888; font-weight: normal; }
.rest input::placeholder { color: #8a8a8a; opacity: 1; }

/* floating dialog and annotations */
.dialog { position: absolute; left: 468px; top: 222px; width: 403px; height: 387px; display: flex; flex-direction: column; padding: 0 4px 4px; border: 1px solid #a2a3af; border-radius: 8px; background: linear-gradient(#d6d7dc, #c4c5cc 26px, #cfd0d6); box-shadow: 0 2px 26px rgba(0, 0, 0, .45); }
.dtitle { height: 24px; display: flex; align-items: center; justify-content: space-between; color: #62636f; }
.dtitle h2 { padding-left: 6px; font-size: 11px; }
.dtitle .winbtn { width: 29px; }
.dbody { flex: 1; display: flex; flex-direction: column; padding: 8px 17px 9px 15px; border: 1px solid #a9aab5; background: #e9eaee; }
.drow { display: flex; margin-right: -17px; }
.dbody .group { height: 45px; margin-bottom: 6px; }
.tipo { width: 163px; }
.tipo .combo { width: 145px; margin: 3px 0 0 10px; }
.data { width: 98px; margin-right: 3px; border-left: 0; }
.data .date { width: 83px; margin: 3px 0 0 7px; }
.valor { width: 108px; border-right: 0; }
.valor input { display: block; width: 90px; height: 18px; margin: 3px 0 0 8px; padding: 0 1px; border: 1px solid #a0a1ae; color: #9c9da8; background: #e4e5e9; }
.hist { width: 360px; }
.hist input { display: block; width: 340px; height: 19px; margin: 4px 0 0 14px; padding: 0 1px; border: 1px solid #8f909f; background: #fff; color: #111; }
.hist input::selection { background: #0078d7; color: #fff; }
.plano { width: 360px; margin-left: 3px; }
.plano .combo { width: 337px; margin: 2px 0 0 10px; }
.centro { width: 360px; height: 49px; min-width: 0; margin: -4px 0 0; padding: 0 0 0 10px; border: 1px solid #bdbec8; border-radius: 3px; }
.centro legend { padding: 0 4px 0 0; height: 14px; font-weight: bold; }
.centro legend label { display: flex; gap: 6px; }
.centro .combo { width: 339px; margin-top: 6px; }
.actions { display: flex; justify-content: flex-end; gap: 8px; margin: auto -5px 0 0; }
.actions .btn { height: 30px; width: 87px; font-size: 11px; }
.ok { padding-left: 14px; }
.actions .no { gap: 6px; padding: 0 1px 0 3px; }
.highlight { position: absolute; left: 474px; top: 210px; width: 389px; height: 395px; border: 4px solid #e81c1c; pointer-events: none; }
.pointer { position: absolute; left: 112px; top: 121px; width: 90px; height: 76px; pointer-events: none; }
```
FILE: app.js
```js
// The description field opens with its text selected, ready to overwrite.
const hist = document.getElementById("hist");
hist.focus();
hist.select();
```
